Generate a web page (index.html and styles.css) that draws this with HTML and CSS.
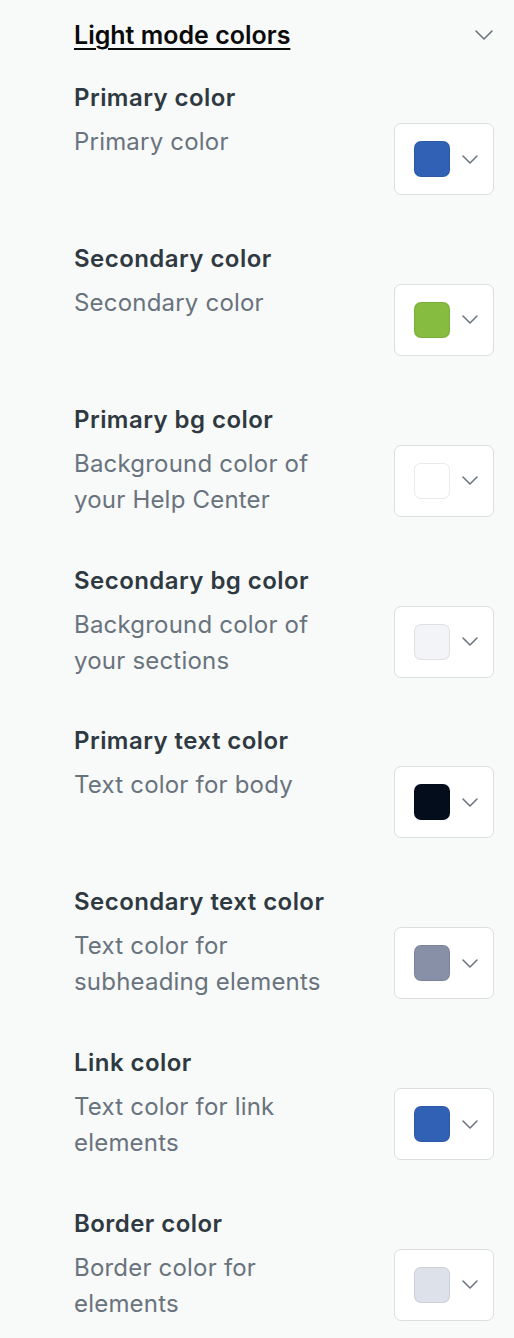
FILE: index.html
```html
<!DOCTYPE html>
<html lang="en">
<head>
<meta charset="utf-8">
<link rel="stylesheet" href="styles.css">
</head>
<body>
<div class="panel">
  <div class="section-header">
    <span class="section-title">Light mode colors</span>
    <svg class="chev-lg" width="18" height="10" viewBox="0 0 18 10"><polyline points="1,1 9,9 17,1" fill="none" stroke="#68737d" stroke-width="1.6" stroke-linecap="round" stroke-linejoin="round"/></svg>
  </div>

  <div class="field">
    <div class="field-title">Primary color</div>
    <div class="field-body">
      <div class="field-desc">Primary color</div>
      <div class="picker"><span class="swatch" style="background:#3061b5"></span><svg class="chev" width="16" height="9" viewBox="0 0 16 9"><polyline points="1,1 8,8 15,1" fill="none" stroke="#68737d" stroke-width="1.5" stroke-linecap="round" stroke-linejoin="round"/></svg></div>
    </div>
  </div>

  <div class="field">
    <div class="field-title">Secondary color</div>
    <div class="field-body">
      <div class="field-desc">Secondary color</div>
      <div class="picker"><span class="swatch" style="background:#86bc40"></span><svg class="chev" width="16" height="9" viewBox="0 0 16 9"><polyline points="1,1 8,8 15,1" fill="none" stroke="#68737d" stroke-width="1.5" stroke-linecap="round" stroke-linejoin="round"/></svg></div>
    </div>
  </div>

  <div class="field">
    <div class="field-title">Primary bg color</div>
    <div class="field-body">
      <div class="field-desc">Background color of your Help Center</div>
      <div class="picker"><span class="swatch" style="background:#ffffff"></span><svg class="chev" width="16" height="9" viewBox="0 0 16 9"><polyline points="1,1 8,8 15,1" fill="none" stroke="#68737d" stroke-width="1.5" stroke-linecap="round" stroke-linejoin="round"/></svg></div>
    </div>
  </div>

  <div class="field">
    <div class="field-title">Secondary bg color</div>
    <div class="field-body">
      <div class="field-desc">Background color of your sections</div>
      <div class="picker"><span class="swatch" style="background:#f3f4f8"></span><svg class="chev" width="16" height="9" viewBox="0 0 16 9"><polyline points="1,1 8,8 15,1" fill="none" stroke="#68737d" stroke-width="1.5" stroke-linecap="round" stroke-linejoin="round"/></svg></div>
    </div>
  </div>

  <div class="field">
    <div class="field-title">Primary text color</div>
    <div class="field-body">
      <div class="field-desc">Text color for body</div>
      <div class="picker"><span class="swatch" style="background:#040d1c"></span><svg class="chev" width="16" height="9" viewBox="0 0 16 9"><polyline points="1,1 8,8 15,1" fill="none" stroke="#68737d" stroke-width="1.5" stroke-linecap="round" stroke-linejoin="round"/></svg></div>
    </div>
  </div>

  <div class="field">
    <div class="field-title">Secondary text color</div>
    <div class="field-body">
      <div class="field-desc">Text color for subheading elements</div>
      <div class="picker"><span class="swatch" style="background:#8890a7"></span><svg class="chev" width="16" height="9" viewBox="0 0 16 9"><polyline points="1,1 8,8 15,1" fill="none" stroke="#68737d" stroke-width="1.5" stroke-linecap="round" stroke-linejoin="round"/></svg></div>
    </div>
  </div>

  <div class="field">
    <div class="field-title">Link color</div>
    <div class="field-body">
      <div class="field-desc">Text color for link elements</div>
      <div class="picker"><span class="swatch" style="background:#3061b5"></span><svg class="chev" width="16" height="9" viewBox="0 0 16 9"><polyline points="1,1 8,8 15,1" fill="none" stroke="#68737d" stroke-width="1.5" stroke-linecap="round" stroke-linejoin="round"/></svg></div>
    </div>
  </div>

  <div class="field">
    <div class="field-title">Border color</div>
    <div class="field-body">
      <div class="field-desc">Border color for elements</div>
      <div class="picker"><span class="swatch" style="background:#dde1ea"></span><svg class="chev" width="16" height="9" viewBox="0 0 16 9"><polyline points="1,1 8,8 15,1" fill="none" stroke="#68737d" stroke-width="1.5" stroke-linecap="round" stroke-linejoin="round"/></svg></div>
    </div>
  </div>
</div>
</body>
</html>
```

FILE: styles.css
```css
html, body {
  margin: 0;
  padding: 0;
  background: #f8f9f9;
}

body {
  font-family: Inter, "Noto Sans", "Liberation Sans", sans-serif;
  -webkit-font-smoothing: antialiased;
}

.panel {
  padding: 17px 20px 0 74px;
}

.section-header {
  display: flex;
  justify-content: space-between;
  align-items: center;
  height: 36px;
  margin-bottom: 26px;
}

.section-title {
  font-size: 25px;
  font-weight: 600;
  color: #0a0a0a;
  text-decoration: underline;
  text-underline-offset: 4px;
  text-decoration-thickness: 2px;
}

.chev-lg {
  margin-right: 1px;
}

.field {
  margin-bottom: 44.85px;
}

.field-title {
  font-size: 24px;
  line-height: 36px;
  font-weight: 600;
  letter-spacing: 0.45px;
  color: #2f3941;
  padding-top: 1px;
  margin-bottom: 7px;
}

.field-body {
  display: flex;
  justify-content: space-between;
  align-items: flex-start;
}

.field-desc {
  width: 256px;
  font-size: 24px;
  line-height: 36px;
  letter-spacing: 0.2px;
  color: #68737d;
  padding-top: 1px;
  margin-bottom: -1px;
}

.picker {
  box-sizing: border-box;
  width: 100px;
  height: 72px;
  display: flex;
  align-items: center;
  gap: 12px;
  padding-left: 19px;
  background: #fff;
  border: 1px solid #dadee0;
  border-radius: 7px;
}

.swatch {
  width: 36px;
  height: 36px;
  box-sizing: border-box;
  border: 1px solid rgba(0, 0, 0, 0.08);
  border-radius: 7px;
}

.chev {
  display: block;
}
```
